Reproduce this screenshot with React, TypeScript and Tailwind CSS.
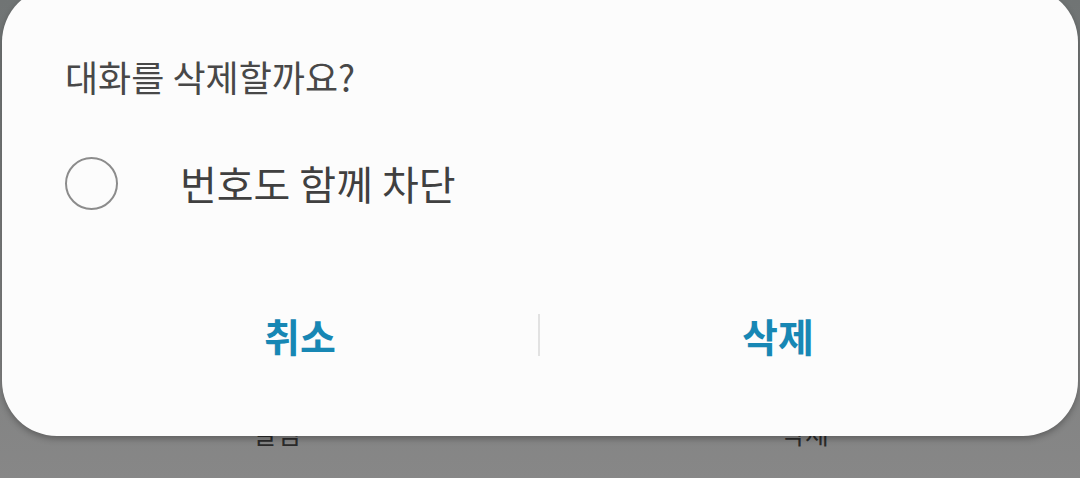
import React from "react";

export default function App() {
  const font = { fontFamily: '"Noto Sans CJK KR", "Noto Sans", sans-serif' };
  return (
    <div
      className="relative w-[1080px] h-[478px] overflow-hidden bg-linear-to-b from-[#707474] to-[#878787]"
      style={font}
    >
      {/* underlying page bottom bar */}
      <div className="flex pt-[418px] text-[26px] leading-[30px] text-[#2b2b2b]">
        <div className="w-[554px] text-center">알림</div>
        <div className="w-[502px] text-center">삭제</div>
      </div>

      {/* dialog */}
      <div className="absolute left-[2px] top-[-13px] w-[1076px] h-[449px] rounded-[55px] bg-[#fcfcfc] shadow-[0_3px_6px_rgba(0,0,0,0.28)] flex flex-col">
        <div className="pt-[68px] pl-[63px] text-[36px] leading-[42px] text-[#484848]">
          대화를 삭제할까요?
        </div>
        <div className="mt-[56px] h-[60px] flex items-center pl-[63px]">
          <div className="w-[53px] h-[53px] rounded-full border-[2.5px] border-[#8c8c8c] shrink-0" />
          <div className="ml-[62px] text-[40px] leading-[46px] text-[#404040]">
            번호도 함께 차단
          </div>
        </div>
        <div className="mt-[82px] h-[80px] flex items-center pl-[60px] pr-[62px]">
          <div className="flex-1 text-center text-[39px] font-bold leading-[46px] text-[#1787b4]">
            취소
          </div>
          <div className="w-[2px] h-[42px] bg-[#e2e2e2]" />
          <div className="flex-1 text-center text-[39px] font-bold leading-[46px] text-[#1787b4]">
            삭제
          </div>
        </div>
      </div>
    </div>
  );
}
